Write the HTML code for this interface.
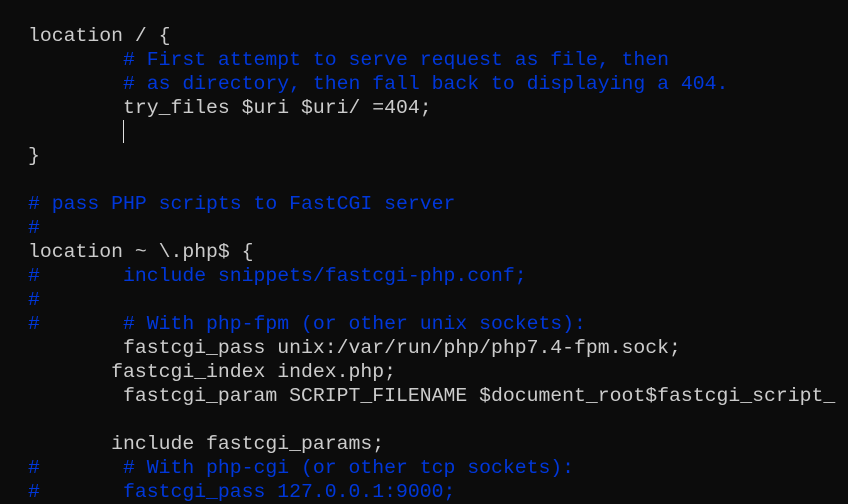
<!DOCTYPE html>
<html><head><style>
html,body{margin:0;padding:0;background:#0c0c0c;width:848px;height:492px;overflow:hidden}
pre{position:absolute;left:28px;top:24px;width:812px;overflow:hidden;margin:0;font-family:"Liberation Mono",monospace;font-size:19.8px;line-height:24px;color:#cccccc;white-space:pre}
.c{color:#0037da}
.cur{position:absolute;left:123px;top:120px;width:1px;height:23px;background:#e0e0e0}
</style></head><body>
<pre>location / {
<span class="c">        # First attempt to serve request as file, then</span>
<span class="c">        # as directory, then fall back to displaying a 404.</span>
        try_files $uri $uri/ =404;

}

<span class="c"># pass PHP scripts to FastCGI server</span>
<span class="c">#</span>
location ~ \.php$ {
<span class="c">#       include snippets/fastcgi-php.conf;</span>
<span class="c">#</span>
<span class="c">#       # With php-fpm (or other unix sockets):</span>
        fastcgi_pass unix:/var/run/php/php7.4-fpm.sock;
       fastcgi_index index.php;
        fastcgi_param SCRIPT_FILENAME $document_root$fastcgi_script_

       include fastcgi_params;
<span class="c">#       # With php-cgi (or other tcp sockets):</span>
<span class="c">#       fastcgi_pass 127.0.0.1:9000;</span></pre>
<div class="cur"></div>
</body></html>
